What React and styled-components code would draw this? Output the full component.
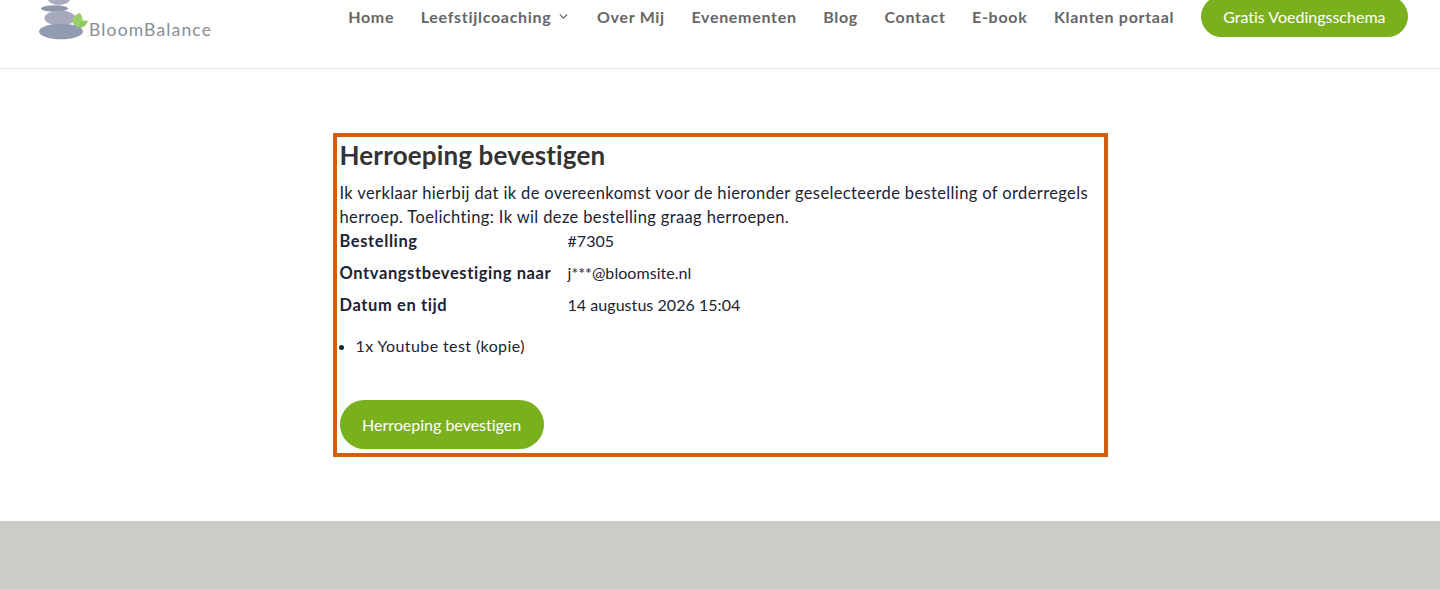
import React from 'react';
import styled, { createGlobalStyle } from 'styled-components';
import { ChevronDown } from 'lucide-react';

const GlobalStyle = createGlobalStyle`
  html, body {
    margin: 0;
    padding: 0;
    background: #fff;
  }
  body {
    font-family: "Lato", "Liberation Sans", sans-serif;
    font-variant-ligatures: none;
    color: #1c2333;
    overflow: hidden;
  }
`;

const Page = styled.div`
  height: 589px;
  display: flex;
  flex-direction: column;
  overflow: hidden;
`;

const Header = styled.header`
  flex: none;
  height: 69px;
  box-sizing: border-box;
  border-bottom: 1px solid #e5e5e5;
  display: flex;
  justify-content: space-between;
  align-items: center;
  padding: 0 32px 36px 39px;
`;

const Logo = styled.div`
  align-self: flex-start;
  display: flex;
  align-items: flex-end;
  height: 40px;
`;

const LogoName = styled.span`
  font-size: 17.5px;
  line-height: 20px;
  color: #8a8e91;
  letter-spacing: 1.15px;
`;

const Nav = styled.nav`
  display: flex;
  align-items: center;
  gap: 26.5px;
`;

const NavLink = styled.a`
  display: flex;
  align-items: center;
  gap: 6px;
  font-size: 16px;
  font-weight: 700;
  color: #666;
  letter-spacing: 0.7px;
  white-space: nowrap;
`;

const PillButton = styled.button`
  border: none;
  background: #7ab01e;
  color: #fff;
  font-family: "Lato", sans-serif;
  font-variant-ligatures: none;
  font-size: 16px;
  height: ${(props) => (props.$compact ? '41px' : '49px')};
  padding: 0 22.5px;
  border-radius: 25px;
  white-space: nowrap;
`;

const Main = styled.main`
  height: 452px;
  flex: none;
  padding-top: 64px;
  box-sizing: border-box;
  display: flex;
  justify-content: center;
`;

const Card = styled.section`
  width: 775px;
  height: 324px;
  box-sizing: border-box;
  border: 4px solid #d0600f;
  padding: 3px;
`;

const Title = styled.h2`
  margin: 0;
  font-size: 26px;
  line-height: 31px;
  font-weight: 700;
  letter-spacing: 0.15px;
  color: #333;
  padding-bottom: 10px;
`;

const Intro = styled.p`
  margin: 0;
  font-size: 16.5px;
  line-height: 24px;
  letter-spacing: 0.37px;
`;

const Details = styled.div`
  display: grid;
  grid-template-columns: 228px 1fr;
  grid-auto-rows: 32px;
  margin-bottom: 9px;
`;

const Label = styled.div`
  font-size: 16.5px;
  line-height: 24px;
  font-weight: 700;
  letter-spacing: 0.6px;
`;

const Value = styled.div`
  font-size: 16px;
  line-height: 24px;
  letter-spacing: 0.05px;
`;

const Items = styled.ul`
  margin: 0 0 42px;
  padding: 0 0 0 16px;
  font-size: 16px;
  line-height: 24px;
  letter-spacing: 0.4px;
`;

const Footer = styled.footer`
  flex: 1;
  background: #cccbc6;
`;

const navItems = ['Over Mij', 'Evenementen', 'Blog', 'Contact', 'E-book', 'Klanten portaal'];

function LogoMark() {
  return (
    <svg width="50" height="40" viewBox="0 0 50 40" style={{ flex: 'none' }}>
      <ellipse cx="20" cy="-1" rx="11" ry="6" fill="#a9abc1" />
      <ellipse cx="15.5" cy="8.5" rx="13.5" ry="3.2" fill="#8f97aa" />
      <ellipse cx="21" cy="18" rx="15.5" ry="7.5" fill="#a7aabf" />
      <path d="M33 21 Q34 15 41 13 Q45 18 43 25 L36 27 Z" fill="#9ccf6a" />
      <path d="M40 26 Q42 19 49 21 Q46 29 37 28 Z" fill="#8fc75b" />
      <ellipse cx="22" cy="31.5" rx="22" ry="7.8" fill="#919cb0" />
    </svg>
  );
}

export default function App() {
  return (
    <Page>
      <GlobalStyle />
      <Header>
        <Logo>
          <LogoMark />
          <LogoName>BloomBalance</LogoName>
        </Logo>
        <Nav>
          <NavLink>Home</NavLink>
          <NavLink>
            Leefstijlcoaching
            <ChevronDown size={13} strokeWidth={2.5} />
          </NavLink>
          {navItems.map((item) => (
            <NavLink key={item}>{item}</NavLink>
          ))}
          <PillButton $compact>Gratis Voedingsschema</PillButton>
        </Nav>
      </Header>
      <Main>
        <Card>
          <Title>Herroeping bevestigen</Title>
          <Intro>
            Ik verklaar hierbij dat ik de overeenkomst voor de hieronder geselecteerde bestelling of orderregels
            herroep. Toelichting: Ik wil deze bestelling graag herroepen.
          </Intro>
          <Details>
            <Label>Bestelling</Label>
            <Value>#7305</Value>
            <Label>Ontvangstbevestiging naar</Label>
            <Value>j***@bloomsite.nl</Value>
            <Label>Datum en tijd</Label>
            <Value>14 augustus 2026 15:04</Value>
          </Details>
          <Items>
            <li>1x Youtube test (kopie)</li>
          </Items>
          <PillButton>Herroeping bevestigen</PillButton>
        </Card>
      </Main>
      <Footer />
    </Page>
  );
}
